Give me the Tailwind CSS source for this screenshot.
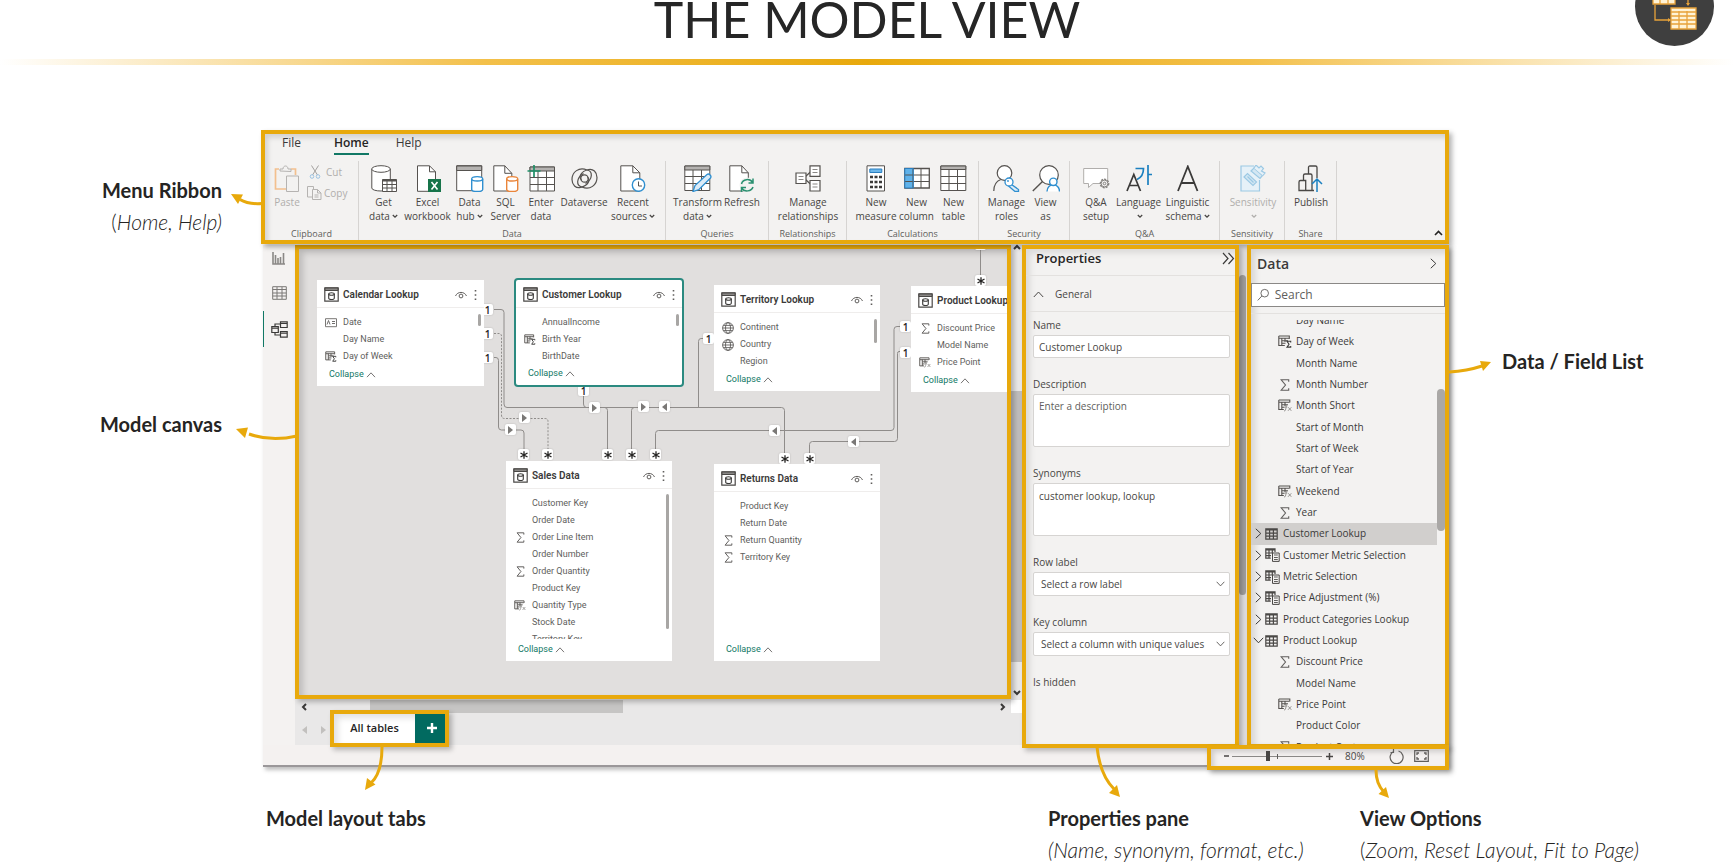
<!DOCTYPE html>
<html lang="en">
<head>
<meta charset="utf-8">
<title>The Model View</title>
<script src="https://cdn.jsdelivr.net/npm/@tailwindcss/browser@4"></script>
</head>
<body class="bg-white text-[#252423] font-['Open_Sans','Noto_Sans',sans-serif]">

<!-- Shared icon symbols -->
<svg class="hidden" aria-hidden="true">
  <symbol id="i-down" viewBox="0 0 6 6"><path d="M.8 2 3 4.2 5.2 2" fill="none" stroke="currentColor" stroke-width="1.3"/></symbol>
  <symbol id="i-paste" viewBox="0 0 26 27"><g fill="none"><path d="M5 4H1.500v20H12M17 4h4.500v6" stroke="#f3c08e" stroke-width="1.700"/><path d="M6 6V4h3c0-4 5-4 5 0h3v2.500z" fill="#f3f2f1" stroke="#b5b3b1"/><path d="M12.500 11h12v15.500h-12z" fill="#f3f2f1" stroke="#b5b3b1"/></g></symbol>
  <symbol id="i-cut" viewBox="0 0 12 14"><g fill="none"><path d="M2.500.5 8.500 10M9.500.5 3.500 10" stroke="#a3a19f"/><circle cx="3" cy="11.500" r="1.800" stroke="#9cc3e2"/><circle cx="9" cy="11.500" r="1.800" stroke="#9cc3e2"/></g></symbol>
  <symbol id="i-copy" viewBox="0 0 15 14"><g fill="#f3f2f1" stroke="#b5b3b1"><path d="M5 11H.5V.5h6V3"/><path d="M5.500 3.500h5l3.500 3.500v6.500H5.500z"/><path d="M10.500 3.500V7H14M7.500 9h4M7.500 11h4" fill="none"/></g></symbol>
  <symbol id="i-get" viewBox="0 0 26 27"><g fill="#fff" stroke="#55524f"><path d="M.8 4v19c0 4 18.500 4 18.500 0V4"/><ellipse cx="10" cy="4" rx="9.300" ry="3.300"/><path d="M11.500 14.500h14v12h-14z"/><path d="M11.500 15.500h14" stroke-width="2"/><path d="M11.500 19.500h14M11.500 23h14M16 16v10M21 16v10" fill="none"/></g></symbol>
  <symbol id="i-excel" viewBox="0 0 26 27"><path d="M2.500.8h12l6 6V26.300h-18z" fill="#fff" stroke="#55524f"/><path d="M14.500.8v6h6" fill="none" stroke="#55524f"/><path d="M13 14h13v13H13z" fill="#17744a"/><path d="m16.500 17 6 7.500m0-7.500-6 7.500" stroke="#fff" stroke-width="1.600"/></symbol>
  <symbol id="i-hub" viewBox="0 0 28 27"><path d="M.7.7h25v25H.7z" fill="#fff" stroke="#55524f"/><path d="M.7 1h25v4.500H.7z" fill="#b5b3b1" stroke="#55524f"/><path d="M15.700 14v10.500c0 2.700 11 2.700 11 0V14" fill="#fff" stroke="#2f8fd0" stroke-width="1.400"/><ellipse cx="21.200" cy="13.800" rx="5.500" ry="2.200" fill="#fff" stroke="#2f8fd0" stroke-width="1.400"/></symbol>
  <symbol id="i-sql" viewBox="0 0 26 27"><path d="M.8.8h11l7 7.500V26H.8z" fill="#fff" stroke="#55524f"/><path d="M11.800.8v7.500h7" fill="none" stroke="#55524f"/><path d="M13.700 14v10.500c0 2.700 11 2.700 11 0V14" fill="#fff" stroke="#ea853a" stroke-width="1.400"/><ellipse cx="19.200" cy="13.800" rx="5.500" ry="2.200" fill="#fff" stroke="#ea853a" stroke-width="1.400"/></symbol>
  <symbol id="i-enter" viewBox="0 0 28 27"><path d="M3 2h24.500v24H3z" fill="#fff" stroke="#55524f"/><path d="M3 2h24.500v4H3z" fill="#b5b3b1" stroke="#55524f"/><path d="M3 12.500h24M3 19.500h24M11 6v20M19.500 6v20" stroke="#55524f"/><path d="M7 0v12M.5 6h13" stroke="#1f9068" stroke-width="1.700"/></symbol>
  <symbol id="i-dataverse" viewBox="0 0 27 27"><g fill="none" stroke="#55524f" stroke-width="1.200"><path d="M16 5C8 1.500 1 7 1 14.500 1 20 5 23.500 9.500 22.500 17.500 20.500 19.500 15 16.500 12.300"/><path d="M11 22c8 3.500 15-2 15-9.500C26 7 22 3.500 17.500 4.500 9.500 6.500 7.500 12 10.500 14.700"/><circle cx="13.500" cy="13.500" r="3.700"/><path d="M11 22c-6-1-6-9 1.500-13.500M16 5c6 1 6 9-1.500 13.500"/></g></symbol>
  <symbol id="i-recent" viewBox="0 0 26 27"><path d="M.8.8h12l7 7V26H.8z" fill="#fff" stroke="#55524f"/><path d="M12.800.8v7h7" fill="none" stroke="#55524f"/><circle cx="18.500" cy="20" r="6.200" fill="#fff" stroke="#2f8fd0" stroke-width="1.400"/><path d="M18.500 16.500v4.500h3.500" fill="none" stroke="#55524f"/></symbol>
  <symbol id="i-transform" viewBox="0 0 28 27"><path d="M.8 1h25v24.500H.8z" fill="#fff" stroke="#55524f"/><path d="M.8 1h25v4H.8z" fill="#b5b3b1" stroke="#55524f"/><path d="M1 11.500h25M1 18.500h25M9 5v20M17.500 5v20" stroke="#55524f"/><path d="m9 26.500 2-6L23 9.500c2-1.500 5 1.500 3.500 3.500L15 24.500z" fill="#dcecf8" stroke="#2f8fd0" stroke-width="1.300"/></symbol>
  <symbol id="i-refresh" viewBox="0 0 26 27"><path d="M.8.8h12l6.500 7V26H.8z" fill="#fff" stroke="#55524f"/><path d="M12.800.8v7h6.500" fill="none" stroke="#55524f"/><circle cx="18" cy="20" r="7.500" fill="#f3f2f1"/><path d="M12.500 19c1-5 8.500-6 11-1.500m.5-4v4.500h-4.500M24 22c-1.500 4.500-8.500 5.500-11.500 1m0 4v-4.500H17" fill="none" stroke="#2a9070" stroke-width="1.500"/></symbol>
  <symbol id="i-rel" viewBox="0 0 26 27"><g fill="#fff" stroke="#55524f" stroke-width="1.200"><path d="M10.500 11.500 17 5.500m-6.500 9L17 20.500" /><path d="M1 8h10v10.500H1zM15 .8h10v10.500H15zM15 15.500h10V26H15z"/><path d="M3.500 11.500h5M3.500 14.500h5M17.500 4.500h5M17.500 7.500h5M17.500 19h5M17.500 22h5" stroke="#8a8886" stroke-width="1"/></g></symbol>
  <symbol id="i-calc" viewBox="0 0 20 27"><path d="M1 .8h17.500V26H1z" fill="#fff" stroke="#55524f"/><path d="M3.800 4h12v3.500h-12z" fill="#6bb6ea" stroke="#2b7fc0"/><path d="M4 12h3M8.500 12h3M13 12h3M4 17h3M8.500 17h3M13 17h3M4 22h3M8.500 22h3M13 22h3" stroke="#3b3a39" stroke-width="2.600"/></symbol>
  <symbol id="i-column" viewBox="0 0 26 27"><path d="M.8 3.500h24.500V23H.8z" fill="#fff" stroke="#55524f" stroke-width="1.300"/><path d="M1 4h8v19H1z" fill="#5fb2ea"/><path d="M1 10h24M1 16.500h24M9 4v19M17 4v19" stroke="#55524f"/><path d="M.8 3.500h8.500V23H.8z" fill="none" stroke="#2b7fc0"/></symbol>
  <symbol id="i-table" viewBox="0 0 27 27"><path d="M.8 1h25v24.500H.8z" fill="#fff" stroke="#55524f"/><path d="M.8 1h25v3.500H.8z" fill="#b5b3b1" stroke="#55524f"/><path d="M1 11.500h25M1 18.500h25M9 5v20M17.500 5v20" stroke="#55524f"/></symbol>
  <symbol id="i-roles" viewBox="0 0 28 27"><g fill="none"><circle cx="11.500" cy="8" r="7.300" fill="#fff" stroke="#55524f" stroke-width="1.200"/><path d="M.8 26c0-6 3-10 7-11.500" stroke="#55524f" stroke-width="1.200"/><path d="m18.500 19.500 7 5v2h-3.500l-6.500-5.500" fill="#dcecf8" stroke="#2f8fd0" stroke-width="1.300"/><circle cx="16" cy="17" r="4" fill="#fff" stroke="#2f8fd0" stroke-width="1.300"/><circle cx="15" cy="16" r=".9" fill="#2f8fd0"/></g></symbol>
  <symbol id="i-viewas" viewBox="0 0 28 27"><circle cx="17" cy="10" r="9.300" fill="#fff" stroke="#55524f" stroke-width="1.200"/><path d="M10.500 16.500.8 26" stroke="#55524f" stroke-width="1.400"/><path d="M15 26.500c0-9 12.500-9 12.500 0" fill="#fff" stroke="#2f8fd0" stroke-width="1.400"/><circle cx="21.300" cy="16.800" r="3.700" fill="#fff" stroke="#2f8fd0" stroke-width="1.400"/></symbol>
  <symbol id="i-qna" viewBox="0 0 27 27"><path d="M.7 3.500h24v15H10L5.500 22.500v-4H.7z" fill="#fff" stroke="#b0aeac"/><circle cx="21.500" cy="18.500" r="4" fill="#f3f2f1" stroke="#85827f" stroke-width="1.800" stroke-dasharray="2 1"/><circle cx="21.500" cy="18.500" r="3.400" fill="#f3f2f1" stroke="#85827f"/><circle cx="21.500" cy="18.500" r="1.300" fill="none" stroke="#85827f"/></symbol>
  <symbol id="i-lang" viewBox="0 0 26 27"><path d="M1 26 7.800 9.500 14.500 26M3.500 20.500h8.800" fill="none" stroke="#3b3a39" stroke-width="1.700"/><path d="M9.500 3.500h8c0 5-2 9-6.500 11M22 0v20M22 9.500h4" fill="none" stroke="#1b80c0" stroke-width="1.700"/></symbol>
  <symbol id="i-ling" viewBox="0 0 22 27"><path d="M1 26 10.800 1.500 20.500 26M4.500 18h12.800" fill="none" stroke="#3b3a39" stroke-width="1.800"/></symbol>
  <symbol id="i-sens" viewBox="0 0 26 27"><g fill="none" stroke="#9cc9e4" stroke-width="1.200"><path d="M14 1H1v25h18.500V15" fill="#e6f1f8"/><path d="m4 12 3.500-3.500 9 8.500-3.500 3.500z" fill="#d3e7f3"/><path d="m7.500 11.500 6 6"/><path d="m11 6 3-3 8.500 7.500-2.500 3z" fill="#d3e7f3"/><path d="m14 3 2-3 3 3 2-2 2.500 2.500-2 2.500L25 8l-2 2.500" fill="#e6f1f8"/></g></symbol>
  <symbol id="i-publish" viewBox="0 0 26 27"><g fill="none" stroke="#4a4846" stroke-width="1.300"><path d="M1 25.500V17c0-1 .5-1.500 1.500-1.500h5.200V25.500zM5.500 15.500v-5c0-1 .5-1.500 1.500-1.500h5.500c1 0 1.500.5 1.500 1.500v15H7.700M10.500 9V2.500C10.500 1.500 11 1 12 1h5.500c1 0 1.500.5 1.500 1.500V13M14 25.500h2"/><path d="M19 27V14m-5 5 5-5 5 5" stroke="#1b80c0" stroke-width="1.500"/></g></symbol>

  <symbol id="i-card" viewBox="0 0 15 15"><path d="M.8.8h13.400v13.400H.8z" fill="#fff" stroke="#4a4846" stroke-width="1.200"/><path d="M1 1h13v2.500H1z" fill="#8a8886" stroke="#4a4846"/><path d="M4.700 7v4.300c0 1.600 5.600 1.600 5.600 0V7" fill="none" stroke="#3b3a39" stroke-width="1.100"/><ellipse cx="7.500" cy="7" rx="2.800" ry="1.200" fill="none" stroke="#3b3a39" stroke-width="1.100"/></symbol>
  <symbol id="i-eye" viewBox="0 0 12 8"><path d="M.5 5C2.500.2 9.500.2 11.500 5" fill="none" stroke="#605e5c"/><circle cx="6" cy="5" r="1.900" fill="none" stroke="#605e5c"/></symbol>
  <symbol id="i-dots" viewBox="0 0 3 12"><path d="M.7 1h1.600v1.600H.7zM.7 5.200h1.600v1.600H.7zM.7 9.400h1.600V11H.7z" fill="#605e5c"/></symbol>
  <symbol id="i-sum" viewBox="0 0 10 12"><path d="M8.700 2.800V.8H1.200L5.500 6 1.200 11.200h7.500v-2" fill="none" stroke="#605e5c" stroke-width="1.100"/></symbol>
  <symbol id="i-globe" viewBox="0 0 12 12"><g fill="none" stroke="#605e5c" stroke-width=".9"><circle cx="6" cy="6" r="5.400"/><ellipse cx="6" cy="6" rx="2.500" ry="5.400"/><path d="M.6 6h10.800M1.300 3.400h9.400M1.300 8.600h9.400"/></g></symbol>
  <symbol id="i-idcard" viewBox="0 0 12 10"><path d="M.5.7h11v8H.5z" fill="#fff" stroke="#7a7876"/><path d="m2 6.500 1.500-4 1.500 4M7 3.500h3M7 5.500h3" stroke="#605e5c" fill="none" stroke-width=".9"/></symbol>
  <symbol id="i-tsum" viewBox="0 0 14 13"><path d="M.8 1h10.500v3M.8 1v9.500h6M1 3.200h10M3.800 3v7.500M7 3v4M4 5.700h6M4 8.200h3.500" fill="none" stroke="#55524f" stroke-width="1.100"/><path d="M12.700 7.500V6.300H9l2 2.900-2 2.900h3.700V11" fill="none" stroke="#3b3a39" stroke-width="1.100"/></symbol>
  <symbol id="i-tfx" viewBox="0 0 14 13"><path d="M.8 1h11v2.500M.8 1v9.500h5M1 3.200h10.500M3.800 3v7.500M7 3v4M4 5.700h6M4 8.200h2.500" fill="none" stroke="#55524f" stroke-width="1.100"/><path d="M9.700 5.700C8.300 5.500 8.300 7 8 8.500c-.3 2-.5 3.700-2 3.500M6.700 8h2.600M10.300 8.300l3 3.500M13.300 8.300l-3.300 3.500" fill="none" stroke="#8a8886" stroke-width=".9"/></symbol>
  <symbol id="i-grid" viewBox="0 0 13 12"><path d="M.8.8h11.400v10.400H.8zM1 2h11M1 5.100h11M1 8.100h11M4.600 2v9M8.400 2v9" fill="none" stroke="#4a4846" stroke-width="1.200"/></symbol>
  <symbol id="i-gridcalc" viewBox="0 0 15 14"><path d="M10 4V.8H.8v9.400h5M1 2h9.500M1 5h6M1 7.700h5M4 2v8M7.300 2v3" fill="none" stroke="#4a4846" stroke-width="1.200"/><path d="M7.500 5h6.700v8.400H7.500z" fill="#f3f2f1" stroke="#4a4846"/><path d="M9 7h3.800M9 9.500h3.800M9 11.500h3.800" stroke="#605e5c" stroke-width="1.200"/></symbol>
  <symbol id="i-right" viewBox="0 0 7 11"><path d="m.8.8 5 4.700-5 4.700" fill="none" stroke="currentColor"/></symbol>
  <symbol id="i-open" viewBox="0 0 11 7"><path d="m.8.8 4.700 5 4.700-5" fill="none" stroke="currentColor"/></symbol>
  <symbol id="i-up" viewBox="0 0 11 7"><path d="m.8 6 4.700-5 4.700 5" fill="none" stroke="currentColor"/></symbol>
</svg>

<div class="relative flex min-h-screen flex-col overflow-hidden">

  <header class="relative flex h-[59px] items-start justify-center">
    <h1 class="font-['Lato'] text-[50px] leading-[38px] whitespace-nowrap text-[#262626]">THE MODEL VIEW</h1>
    <svg class="absolute right-5 bottom-[13px] h-[79px] w-[79px]" viewBox="0 0 79 79" aria-hidden="true">
      <circle cx="39.500" cy="39.500" r="39.500" fill="#3f3f3f"/>
      <g fill="none" stroke="#e8a33a" stroke-width="1.300">
        <path d="M18 17h22v20H18z" fill="#fff3d6"/><path d="M18 22h22M18 27h22M18 32h22M25 17v20M33 17v20"/>
        <path d="M20 38v15h15M53 20v18M41 22h12"/>
        <path d="M36 41h25v21H36z" fill="#fff3d6"/><path d="M36 45h25M36 49h25M36 53h25M36 57h25M44 44v18M52 44v18"/>
      </g>
      <path d="m33 51 3 2-3 2zM51 36l2 3 2-3z" fill="#e8a33a"/>
    </svg>
  </header>
  <div class="h-[6px] bg-[linear-gradient(90deg,#ffffff,#f3c04a_28%,#e8a90c_50%,#f3c04a_72%,#ffffff)]"></div>

  <main class="mt-[65px] flex">
    <aside class="w-[261px] shrink-0 pr-[39px] text-right font-['Lato']">
      <h2 class="mt-[48px] text-[20px] leading-6 font-bold">Menu Ribbon</h2>
      <p class="mt-2 text-[21px] leading-6 font-light">(<i>Home, Help)</i></p>
      <h2 class="mt-[178px] text-[20px] leading-6 font-bold">Model canvas</h2>
    </aside>

    <div class="min-w-0 flex-1">
      <!-- Ribbon -->
      <section class="relative z-10 h-[114px] overflow-hidden border-4 border-[#e8a90c] bg-[#f3f2f1] shadow-[3px_3px_5px_rgba(0,0,0,0.3),inset_3px_4px_5px_rgba(0,0,0,0.13)]" aria-label="Menu ribbon">
        <nav class="flex h-[22px] gap-[27px] pl-[17px] text-[12px] leading-[18px] text-[#3b3a39]">
          <a href="#" class="w-[25px]">File</a>
          <a href="#" class="h-[21px] border-b-2 border-[#117865] font-semibold text-[#252423]">Home</a>
          <a href="#">Help</a>
        </nav>
        <div id="ribbon" class="mt-[5px] flex h-[79px] text-[10px] leading-[14px] text-[#484644]"></div>
        <button class="absolute right-[2px] bottom-1 text-[#252423]" aria-label="Collapse ribbon"><svg class="h-[6px] w-[9px]" viewBox="0 0 9 6"><path d="M1 5 4.500 1.500 8 5" fill="none" stroke="currentColor" stroke-width="1.600"/></svg></button>
      </section>

      <div class="mt-px ml-[2px] h-[522px] border-b-2 border-[#9a9799] bg-[#f4f1f0] shadow-[2px_3px_4px_rgba(0,0,0,0.25)]">
        <div class="flex h-[500px]">
          <!-- View switcher -->
          <nav class="flex w-8 shrink-0 flex-col items-center bg-[#f4f2f1]" aria-label="Views">
            <button class="mt-[5px] h-4" aria-label="Report view"><svg class="h-[14px] w-[14px]" viewBox="0 0 14 14"><path d="M1 1v12h12M3.500 4v9M6 7v6M8.500 6v7M11.500 2v11" fill="none" stroke="#8a8886" stroke-width="1.600"/></svg></button>
            <button class="mt-[19px] h-4" aria-label="Data view"><svg class="h-[14px] w-[15px]" viewBox="0 0 15 14"><path d="M.7.7h13.600v12.600H.7zM.7 3.500h13.600M.7 7h13.600M.7 10h13.600M5 1v12M10 1v12" fill="none" stroke="#7a7876"/></svg></button>
            <button class="mt-[10px] flex h-9 w-full items-center justify-center border-l-[1px] border-[#117865]" aria-label="Model view"><svg class="h-[17px] w-[17px]" viewBox="0 0 17 17"><path d="M9.500.8h6.700v5.700H9.500zM.8 5.500h6.500v6H.8zM9.500 10.500h6.700v5.700H9.500zM4 5.500V3h5.500M4 11.500V14h5.500M9.500 2.500h6.700M.8 7.200h6.500M9.500 12.200h6.700" fill="none" stroke="#3b3a39" stroke-width="1.200"/></svg></button>
          </nav>

          <div class="flex min-w-0 flex-1 flex-col bg-[#e9e8e8]">
            <div class="flex h-[454px]">
              <!-- Canvas -->
              <section id="canvas" class="relative min-w-0 flex-1 overflow-hidden border-4 border-[#e8a90c] bg-[#e1dfde] shadow-[3px_3px_5px_rgba(0,0,0,0.25),inset_4px_4px_6px_rgba(0,0,0,0.16)]" aria-label="Model canvas">
                <svg class="absolute inset-0 h-full w-full" aria-hidden="true">
                  <g transform="translate(-299 -249)" fill="none" stroke="#8f8c8a">
                    <path d="M494 309.500h7q3 0 3 3V404q0 3.500 3 3.500H781.500q3 0 3 3V455"/>
                    <path d="M494 333.500h5q2.500 0 2.500 3V415q0 3.500 3 3.500H545q3 0 3 3V455" stroke-dasharray="2 1.500"/>
                    <path d="M494 357.500h2q2.500 0 2.500 3V427q0 3 3 3H521q3 0 3 3V455"/>
                    <path d="M583.500 391V404q0 3.500 3 3.500H604.500q3 0 3 3V455"/>
                    <path d="M703 338.500h-2q-2.500 0-2.500 3V407.500H634.500q-3 0-3 3V455"/>
                    <path d="M900 326.500h-3q-3 0-3 3V427.500q0 3-3 3H658.500q-3 0-3 3V455"/>
                    <path d="M900 351.500h-1q-1.500 0-1.500 2V438.500q0 3-3 3H812.500q-3 0-3 3V459"/>
                    <path d="M980.500 249V280"/>
                  </g>
                </svg>
              </section>
              <!-- Vertical scroll bar -->
              <div class="flex w-[11px] shrink-0 flex-col items-center bg-[#e9e8e8] text-[#3b3a39]">
                <svg class="-mt-px h-[6px] w-[8px]" viewBox="0 0 8 6"><path d="M1 5 4 2l3 3" fill="none" stroke="currentColor" stroke-width="2"/></svg>
                <div class="mt-[141px] h-[271px] w-full bg-[#bfbdbc]"></div>
                <svg class="mt-[28px] h-[6px] w-[8px]" viewBox="0 0 8 6"><path d="M1 1l3 3 3-3" fill="none" stroke="currentColor" stroke-width="2"/></svg>
              </div>
            </div>
            <!-- Horizontal scroll bar -->
            <div class="flex h-[15px] items-center text-[#3b3a39]">
              <svg class="ml-[6px] h-[8px] w-[6px]" viewBox="0 0 6 8"><path d="M5 1 2 4l3 3" fill="none" stroke="currentColor" stroke-width="2"/></svg>
              <div class="ml-[63px] h-[13px] w-[253px] bg-[#c6c5c4]"></div>
              <svg class="mr-[5px] ml-auto h-[8px] w-[6px]" viewBox="0 0 6 8"><path d="m1 1 3 3-3 3" fill="none" stroke="currentColor" stroke-width="2"/></svg>
              <div class="h-[13px] w-[11px] bg-white"></div>
            </div>
            <!-- Layout tabs -->
            <div class="flex h-[31px] items-center text-[#c2c0be]">
              <svg class="ml-[7px] h-[8px] w-[5px]" viewBox="0 0 5 8"><path d="M5 0v8L0 4z" fill="currentColor"/></svg>
              <svg class="ml-[14px] h-[8px] w-[5px]" viewBox="0 0 5 8"><path d="M0 0v8l5-4z" fill="currentColor"/></svg>
              <div class="relative z-10 -mt-[3px] ml-[4px] flex h-[37px] shrink-0 border-4 border-[#e8a90c] shadow-[3px_3px_5px_rgba(0,0,0,0.25)]">
                <button class="w-[81px] bg-white pt-px text-[11px] font-semibold text-[#252423] shadow-[inset_4px_4px_6px_rgba(0,0,0,0.12)]">All tables</button>
                <button class="flex w-[30px] items-center justify-center bg-[#016a60]" aria-label="New layout"><svg class="ml-1 h-[10px] w-[10px]" viewBox="0 0 10 10"><path d="M5 0v10M0 5h10" stroke="#fff" stroke-width="2.400"/></svg></button>
              </div>
            </div>
          </div>

          <!-- Properties pane -->
          <section class="relative z-10 -mb-[3px] w-[217px] shrink-0 border-4 border-[#e8a90c] bg-[#f3f2f1] text-[11px] text-[#484644] shadow-[3px_3px_5px_rgba(0,0,0,0.25),inset_4px_4px_6px_rgba(0,0,0,0.1)]" aria-label="Properties">
            <div class="flex h-[27px] items-center justify-between border-b border-[#e3e1df] pl-[10px] pb-[8px]">
              <h3 class="text-[13px] leading-5 font-semibold text-[#252423]">Properties</h3>
              <button class="text-[#3b3a39]" aria-label="Hide properties"><svg class="h-[13px] w-[13px]" viewBox="0 0 13 13"><path d="m1 1 5 5.500L1 12M6.500 1l5 5.500-5 5.500" fill="none" stroke="currentColor" stroke-width="1.200"/></svg></button>
            </div>
            <button class="flex h-[36px] w-full items-center gap-[11px] border-b border-[#e3e1df] pt-px pl-[7px] text-[10px]"><svg class="h-[7px] w-[11px]"><use href="#i-up"/></svg>General</button>
            <form class="flex flex-col gap-[18px] pt-[5px] pr-[5px] pl-[7px] text-[10px]">
              <div class="flex flex-col gap-[2px]"><label for="p-name" class="leading-4">Name</label><input id="p-name" value="Customer Lookup" class="h-[23px] rounded-xs border border-[#d6d4d2] bg-white px-[5px]"></div>
              <div class="flex flex-col gap-[2px]"><label for="p-desc" class="leading-4">Description</label><textarea id="p-desc" placeholder="Enter a description" class="h-[53px] resize-none rounded-xs border border-[#d6d4d2] bg-white px-[5px] py-[3px] leading-4 placeholder:text-[#605e5c]"></textarea></div>
              <div class="flex flex-col gap-[2px]"><label for="p-syn" class="leading-4">Synonyms</label><textarea id="p-syn" class="h-[53px] resize-none rounded-xs border border-[#d6d4d2] bg-white px-[5px] py-1 leading-4">customer lookup, lookup</textarea></div>
              <div class="relative flex flex-col gap-[2px]"><label for="p-row" class="leading-4">Row label</label><select id="p-row" class="h-6 appearance-none rounded-xs border border-[#d6d4d2] bg-white px-[7px]"><option>Select a row label</option></select><svg class="pointer-events-none absolute right-[5px] bottom-[9px] h-[6px] w-[9px]"><use href="#i-open"/></svg></div>
              <div class="relative flex flex-col gap-[2px]"><label for="p-key" class="leading-4">Key column</label><select id="p-key" class="h-6 appearance-none rounded-xs border border-[#d6d4d2] bg-white px-[7px]"><option>Select a column with unique values</option></select><svg class="pointer-events-none absolute right-[5px] bottom-[9px] h-[6px] w-[9px]"><use href="#i-open"/></svg></div>
              <p class="leading-4">Is hidden</p>
            </form>
          </section>

          <div class="w-2 shrink-0 bg-[#e4e1e0] pt-[30px]"><div class="h-[320px] w-[7px] rounded-full bg-[#a3a09e]"></div></div>

          <!-- Data pane -->
          <section class="relative z-10 -mb-[3px] flex w-[202px] shrink-0 flex-col border-4 border-[#e8a90c] bg-[#f3f2f1] text-[10px] text-[#3b3a39] shadow-[3px_3px_5px_rgba(0,0,0,0.3),inset_4px_4px_6px_rgba(0,0,0,0.12)]" aria-label="Data">
            <div class="flex h-[34px] items-center justify-between pr-[8px] pb-[6px] pl-[6px]">
              <h3 class="text-[14px] font-semibold">Data</h3>
              <button aria-label="Hide data pane"><svg class="h-[11px] w-[7px]"><use href="#i-right"/></svg></button>
            </div>
            <label class="flex h-6 shrink-0 items-center gap-[5px] border border-[#8a8886] bg-white pl-[5px]">
              <svg class="h-[14px] w-[14px]" viewBox="0 0 14 14"><circle cx="8.500" cy="5" r="4.200" fill="none" stroke="#605e5c"/><path d="M5.500 8 .8 13" stroke="#605e5c"/></svg>
              <input type="text" placeholder="Search" aria-label="Search" class="w-full min-w-0 bg-transparent text-[12px] placeholder:text-[#605e5c]">
            </label>
            <div class="mt-[6px] border-t border-[#e3e1df]"></div>
            <div class="relative mt-[6px] min-h-0 flex-1 overflow-hidden">
              <ul id="tree" class="-mt-[10px] mr-2 grid h-[448px] auto-rows-fr"></ul>
              <div class="absolute top-[69px] right-0 h-[142px] w-2 rounded-full bg-[#aaa8a6]"></div>
            </div>
          </section>
        </div>

        <!-- View options -->
        <div class="relative z-20 ml-auto flex h-[25px] w-[242px] items-center border-4 border-[#e8a90c] bg-[#f4f1f0] pb-[3px] text-[10px] text-[#484644] shadow-[3px_3px_5px_rgba(0,0,0,0.3),inset_3px_3px_5px_rgba(0,0,0,0.15)]">
          <button class="ml-[13px] w-[5px]" aria-label="Zoom out"><svg class="h-2 w-[5px]" viewBox="0 0 5 8"><path d="M0 4h5" stroke="currentColor" stroke-width="1.500"/></svg></button>
          <div class="relative ml-[3px] flex h-4 w-[90px] items-center">
            <input type="range" min="0" max="100" value="39" aria-label="Zoom" class="h-px w-full appearance-none bg-[#8a8886] [&::-webkit-slider-thumb]:h-[10px] [&::-webkit-slider-thumb]:w-1 [&::-webkit-slider-thumb]:appearance-none [&::-webkit-slider-thumb]:bg-[#484644]">
            <span class="absolute top-[6px] left-[45px] h-[5px] w-px bg-[#605e5c]"></span>
          </div>
          <button class="ml-[4px]" aria-label="Zoom in"><svg class="h-[7px] w-[7px]" viewBox="0 0 7 7"><path d="M3.500 0v7M0 3.500h7" stroke="currentColor" stroke-width="1.500"/></svg></button>
          <span class="ml-[12px] w-[22px] leading-4">80%</span>
          <button class="ml-[22px]" aria-label="Reset layout"><svg class="h-[15px] w-[15px]" viewBox="0 0 15 15"><path d="M4.500 2.500A6.500 6.500 0 1 0 9.500 2M4.500 0v3.500H1.500" fill="none" stroke="#605e5c" stroke-width="1.200"/></svg></button>
          <button class="ml-[10px]" aria-label="Fit to page"><svg class="h-[12px] w-[15px]" viewBox="0 0 15 12"><path d="M.7.7h13.600v10.600H.7z" fill="none" stroke="#605e5c" stroke-width="1.200"/><path d="M3 5V3h2M10 3h2v2M12 7v2h-2M5 9H3V7" fill="none" stroke="#605e5c" stroke-width="1.300"/></svg></button>
        </div>
      </div>
    </div>

    <aside class="w-[285px] shrink-0 pl-[53px] font-['Lato']">
      <h2 class="mt-[219px] text-[20px] leading-6 font-bold">Data / Field List</h2>
    </aside>
  </main>

  <footer class="mt-[39px] flex font-['Lato'] text-[20px] leading-6">
    <h2 class="ml-[266px] font-bold">Model layout tabs</h2>
    <div class="ml-auto w-[312px] shrink-0"><h2 class="font-bold">Properties pane</h2><p class="mt-2 text-[21px] font-light whitespace-nowrap italic">(Name, synonym, format, etc.)</p></div>
    <div class="w-[374px] shrink-0"><h2 class="font-bold">View Options</h2><p class="mt-2 text-[21px] font-light whitespace-nowrap">(<i>Zoom, Reset Layout, Fit to Page)</i></p></div>
  </footer>

  <!-- Callout arrows -->
  <svg class="pointer-events-none absolute top-[180px] left-[225px] z-30 h-[620px] w-[170px]" viewBox="225 180 170 620" aria-hidden="true">
    <g fill="none" stroke="#e8a90c" stroke-width="3"><path d="M262 203.500q-14 1-22-4"/><path d="M297 436q-26 6-48-2"/><path d="M382 747q0 26-11 36"/></g>
    <g fill="#e8a90c"><path d="m231 194 12 .5-5 9.500zM236 429l12-1.500-3 10.500zM365 790l2-12 8.500 6.500z"/></g>
  </svg>
  <svg class="pointer-events-none absolute top-[350px] right-[234px] z-30 h-[450px] w-[420px]" viewBox="1080 350 420 450" aria-hidden="true">
    <g fill="none" stroke="#e8a90c" stroke-width="3"><path d="M1449 372q18-1 33-6"/><path d="M1097 747q3 28 17 42"/><path d="M1376 770q0 14 8 22"/></g>
    <g fill="#e8a90c"><path d="m1491 362-11-1 3 10zM1120 797l-3-12-8 8zM1389 798l-3-11-7.500 7z"/></g>
  </svg>
</div>

<script>
const svg = (id, cls) => `<svg class="${cls}" aria-hidden="true"><use href="#${id}"/></svg>`;
const caret = svg('i-down', 'inline h-[6px] w-[6px] ml-[2px] align-[1px]');

// Ribbon: [group, group class, [[icon, icon class, line 1, line 2, has caret, button width class]]]
const groups = [
  ['Data', 'w-[307px] pl-[2px]', [
    ['i-get', 'h-[27px] w-[26px]', 'Get', 'data', 1, 'w-[45px]'],
    ['i-excel', 'h-[27px] w-[26px]', 'Excel', 'workbook', 0, 'w-[43px]'],
    ['i-hub', 'h-[27px] w-[28px]', 'Data', 'hub', 1, 'w-[41px]'],
    ['i-sql', 'h-[27px] w-[26px]', 'SQL', 'Server', 0, 'w-[31px]'],
    ['i-enter', 'h-[27px] w-[28px]', 'Enter', 'data', 0, 'w-[40px]'],
    ['i-dataverse', 'h-[27px] w-[27px]', 'Dataverse', '', 0, 'w-[46px]'],
    ['i-recent', 'h-[27px] w-[26px]', 'Recent', 'sources', 1, 'w-[52px]']]],
  ['Queries', 'w-[103px] pl-[7px]', [
    ['i-transform', 'h-[27px] w-[28px]', 'Transform', 'data', 1, 'w-[49px]'],
    ['i-refresh', 'h-[27px] w-[26px]', 'Refresh', '', 0, 'w-[40px]']]],
  ['Relationships', 'w-[78px] pl-[9px]', [['i-rel', 'h-[27px] w-[26px]', 'Manage', 'relationships', 0, 'w-[60px]']]],
  ['Calculations', 'w-[132px] pl-[9px]', [
    ['i-calc', 'h-[27px] w-[20px]', 'New', 'measure', 0, 'w-[40px]'],
    ['i-column', 'h-[27px] w-[26px]', 'New', 'column', 0, 'w-[41px]'],
    ['i-table', 'h-[27px] w-[27px]', 'New', 'table', 0, 'w-[33px]']]],
  ['Security', 'w-[91px] pl-[7px]', [
    ['i-roles', 'h-[27px] w-[28px]', 'Manage', 'roles', 0, 'w-[41px]'],
    ['i-viewas', 'h-[27px] w-[28px]', 'View', 'as', 0, 'w-[37px]']]],
  ['Q&amp;A', 'w-[150px] pl-[9px]', [
    ['i-qna', 'h-[27px] w-[27px]', 'Q&amp;A', 'setup', 0, 'w-[34px]'],
    ['i-lang', 'h-[27px] w-[26px]', 'Language', '', 1, 'w-[51px]'],
    ['i-ling', 'h-[27px] w-[22px]', 'Linguistic', 'schema', 1, 'w-[47px]']]],
  ['Sensitivity', 'w-[65px] pl-[8px]', [['i-sens', 'h-[27px] w-[26px]', 'Sensitivity', '', 1, 'w-[50px] text-[#b0aeac]']]],
  ['Share', 'w-[52px] pl-[6px]', [['i-publish', 'h-[27px] w-[26px]', 'Publish', '', 0, 'w-[40px]']]],
];
const clipboard = `<div class="flex w-[94px] shrink-0 flex-col justify-between border-r border-[#d6d4d2] text-[#b0aeac]">
  <div class="flex pt-1 pl-1">
    <button class="flex w-[36px] flex-col items-center">${svg('i-paste', 'h-[27px] w-[26px]')}<span class="mt-[3px]">Paste</span></button>
    <div class="flex flex-col gap-[7px] pl-[2px]">
      <button class="flex h-[14px] items-center gap-[5px]">${svg('i-cut', 'h-[14px] w-[12px] ml-[2px]')}Cut</button>
      <button class="flex h-[14px] items-center gap-[2px]">${svg('i-copy', 'h-[14px] w-[15px]')}Copy</button>
    </div>
  </div>
  <span class="text-center text-[9px] leading-[12px] text-[#605e5c]">Clipboard</span></div>`;
document.getElementById('ribbon').innerHTML = clipboard + groups.map(([name, cls, items]) =>
  `<div class="relative flex shrink-0 flex-col justify-between border-r border-[#d6d4d2] ${cls}">
    <div class="flex pt-1">${items.map(([ic, icls, a, b, c, w]) =>
      `<button class="flex shrink-0 flex-col items-center whitespace-nowrap ${w}">${svg(ic, icls)}<span class="mt-[3px]">${a}</span><span>${b}${c ? caret : ''}</span></button>`).join('')}</div>
    <span class="absolute inset-x-0 bottom-0 text-center text-[9px] leading-[12px] text-[#605e5c]">${name}</span></div>`).join('');

// Canvas cards
const fieldIcon = { sum: svg('i-sum', 'h-[11px] w-[9px]'), globe: svg('i-globe', 'h-3 w-3'), id: svg('i-idcard', 'h-[10px] w-3'), tsum: svg('i-tsum', 'h-[11px] w-3'), tfx: svg('i-tfx', 'h-[11px] w-3'), '': '' };
const cards = [
  ['Calendar Lookup', 'left-[18px] top-[31px] h-[106px] w-[167px]', [['id', 'Date'], ['', 'Day Name'], ['tsum', 'Day of Week']], 'top-[34px] h-3'],
  ['Customer Lookup', 'left-[217px] top-[31px] h-[105px] w-[166px] rounded-xs ring-2 ring-[#2b8a80]', [['', 'AnnualIncome'], ['tsum', 'Birth Year'], ['', 'BirthDate']], 'top-[34px] h-3'],
  ['Territory Lookup', 'left-[415px] top-[36px] h-[106px] w-[166px]', [['globe', 'Continent'], ['globe', 'Country'], ['', 'Region']], 'top-[34px] h-6'],
  ['Product Lookup', 'left-[612px] top-[37px] h-[106px] w-[166px]', [['sum', 'Discount Price'], ['', 'Model Name'], ['tfx', 'Price Point']], 'hidden'],
  ['Sales Data', 'left-[207px] top-[212px] h-[200px] w-[166px]', [['', 'Customer Key'], ['', 'Order Date'], ['sum', 'Order Line Item'], ['', 'Order Number'], ['sum', 'Order Quantity'], ['', 'Product Key'], ['tfx', 'Quantity Type'], ['', 'Stock Date'], ['', 'Territory Key']], 'top-[33px] h-[135px]'],
  ['Returns Data', 'left-[415px] top-[215px] h-[197px] w-[166px]', [['', 'Product Key'], ['', 'Return Date'], ['sum', 'Return Quantity'], ['sum', 'Territory Key']], 'hidden'],
];
// Relationship ends and direction markers: [position, glyph]
const marks = [
  ['left-[183px] top-[55px]', '1'], ['left-[183px] top-[79px]', '1'], ['left-[183px] top-[103px]', '1'],
  ['left-[279px] top-[136px]', '1'], ['left-[404px] top-[84px]', '1'], ['left-[601px] top-[72px]', '1'], ['left-[601px] top-[98px]', '1'],
  ['left-[219px] top-[200px]', '*'], ['left-[243px] top-[200px]', '*'], ['left-[303px] top-[200px]', '*'], ['left-[327px] top-[200px]', '*'], ['left-[351px] top-[200px]', '*'],
  ['left-[480px] top-[204px]', '*'], ['left-[505px] top-[204px]', '*'], ['left-[676px] top-[26px]', '*'], ['left-[676px] -top-[10px]', ''],
  ['left-[206px] top-[175px]', '>'], ['left-[220px] top-[163px]', '>'], ['left-[290px] top-[153px]', '>'], ['left-[339px] top-[152px]', '>'],
  ['left-[360px] top-[152px]', '<'], ['left-[470px] top-[176px]', '<'], ['left-[549px] top-[187px]', '<'],
];
const glyph = {
  '1': '<span class="text-[10px] leading-none font-semibold">1</span>',
  '*': '<svg class="h-2 w-2" viewBox="0 0 8 8"><path d="M4 .3v7.400M.5 2 7.500 6M7.500 2 .5 6" stroke="#252423" stroke-width="1.300"/></svg>',
  '>': '<svg class="h-2 w-[5px]" viewBox="0 0 5 8"><path d="M0 0v8l5-4z" fill="#7a7876"/></svg>',
  '<': '<svg class="h-2 w-[5px]" viewBox="0 0 5 8"><path d="M5 0v8L0 4z" fill="#7a7876"/></svg>', '': '' };
document.getElementById('canvas').insertAdjacentHTML('beforeend',
  marks.map(([pos, g]) => `<span class="absolute flex h-[11px] w-[11px] items-center justify-center rounded-xs bg-white shadow-[0_0_2px_rgba(0,0,0,0.2)] ${pos}">${glyph[g]}</span>`).join('') +
  cards.map(([title, pos, rows, thumb]) => `<article class="absolute flex flex-col bg-white font-['Roboto'] text-[9px] text-[#605e5c] ${pos}">
    <header class="flex h-7 shrink-0 items-center gap-[4px] border-b border-[#efedec] pt-[2px] pr-[7px] pl-[7px]">
      ${svg('i-card', 'h-[15px] w-[15px]')}<h4 class="mr-auto text-[10px] font-semibold whitespace-nowrap text-[#3b3a39]">${title}</h4>
      ${svg('i-eye', 'h-2 w-3')}${svg('i-dots', 'ml-[3px] h-3 w-[3px]')}
    </header>
    <ul class="min-h-0 flex-1 overflow-hidden pt-[6px]">${rows.map(([i, t]) => `<li class="flex h-[17px] items-center"><span class="ml-[8px] flex w-[12px] justify-center">${fieldIcon[i]}</span><span class="ml-[6px]">${t}</span></li>`).join('')}</ul>
    <button class="flex h-[22px] shrink-0 items-center gap-[2px] pl-3 text-[#117865]">Collapse ${svg('i-up', 'h-[6px] w-[10px] text-[#605e5c]')}</button>
    <span class="absolute right-[3px] w-[3px] rounded-full bg-[#a8a6a4] ${thumb}"></span>
  </article>`).join(''));

// Field list: [kind, label]
const tree = [['', 'Day Name'], ['tsum', 'Day of Week'], ['', 'Month Name'], ['sum', 'Month Number'], ['tfx', 'Month Short'], ['', 'Start of Month'], ['', 'Start of Week'], ['', 'Start of Year'], ['tfx', 'Weekend'], ['sum', 'Year'],
  ['T', 'Customer Lookup'], ['C', 'Customer Metric Selection'], ['C', 'Metric Selection'], ['C', 'Price Adjustment (%)'], ['T', 'Product Categories Lookup'], ['O', 'Product Lookup'],
  ['sum', 'Discount Price'], ['', 'Model Name'], ['tfx', 'Price Point'], ['', 'Product Color'], ['sum', 'Product Cost']];
const treeIcon = { sum: svg('i-sum', 'h-3 w-[10px]'), tsum: svg('i-tsum', 'h-[13px] w-[14px]'), tfx: svg('i-tfx', 'h-[13px] w-[14px]'), '': '' };
document.getElementById('tree').innerHTML = tree.map(([k, t]) => {
  if ('TCO'.includes(k) && k) {
    const chev = k === 'O' ? svg('i-open', 'h-[7px] w-[11px]') : svg('i-right', 'h-[11px] w-[7px]');
    const ic = k === 'C' ? svg('i-gridcalc', 'h-[14px] w-[15px]') : svg('i-grid', 'h-3 w-[13px]');
    return `<li class="flex items-center ${t === 'Customer Lookup' ? 'bg-[#d1cfcd]' : ''}"><button class="flex w-[14px] justify-center" aria-label="Toggle ${t}">${chev}</button><span class="flex w-[15px] shrink-0">${ic}</span><span class="ml-[3px] whitespace-nowrap">${t}</span></li>`;
  }
  return `<li class="flex items-center"><span class="ml-[27px] flex w-[14px] justify-center">${treeIcon[k]}</span><span class="ml-1 whitespace-nowrap">${t}</span></li>`;
}).join('');
</script>
</body>
</html>
